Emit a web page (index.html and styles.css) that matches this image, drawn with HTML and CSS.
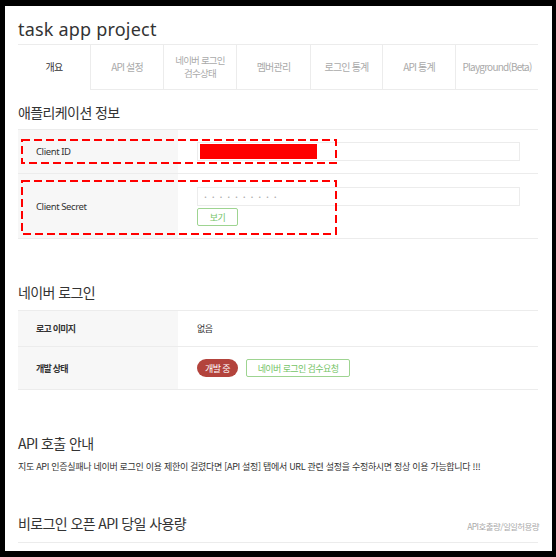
FILE: index.html
```html
<!DOCTYPE html>
<html lang="ko">
  <head>
    <meta charset="UTF-8">
    <meta name="viewport" content="width=device-width, initial-scale=1.0">
    <title>task app project</title>
    <link rel="stylesheet" href="styles.css">
  </head>
  <body>
    <div class="frame">
      <h1 class="app-title">task app project</h1>
      <ul class="tabs">
        <li class="tab active">개요</li>
        <li class="tab">API 설정</li>
        <li class="tab two-line">네이버 로그인<br>검수상태</li>
        <li class="tab">멤버관리</li>
        <li class="tab">로그인 통계</li>
        <li class="tab">API 통계</li>
        <li class="tab">Playground(Beta)</li>
      </ul>

      <h2 class="sec-title first">애플리케이션 정보</h2>
      <div class="info-table">
        <div class="row row-id">
          <div class="label latin">Client ID</div>
          <div class="value">
            <div class="text-box"><span class="redact"></span></div>
          </div>
        </div>
        <div class="row row-secret">
          <div class="label latin">Client Secret</div>
          <div class="value stack">
            <div class="text-box"><span class="dots">••••••••••</span></div>
            <button type="button" class="btn-line small">보기</button>
          </div>
        </div>
        <svg class="mark mark-id" width="316" height="25" viewBox="0 0 316 25">
          <rect x="1" y="1" width="314" height="23" fill="none" stroke="#ff0000" stroke-width="2" stroke-dasharray="8 4"/>
        </svg>
        <svg class="mark mark-secret" width="316" height="55" viewBox="0 0 316 55">
          <rect x="1" y="1" width="314" height="53" fill="none" stroke="#ff0000" stroke-width="2" stroke-dasharray="8 4"/>
        </svg>
      </div>

      <h2 class="sec-title second">네이버 로그인</h2>
      <div class="info-table">
        <div class="row row-logo">
          <div class="label strong">로고 이미지</div>
          <div class="value">없음</div>
        </div>
        <div class="row row-state">
          <div class="label strong">개발 상태</div>
          <div class="value inline">
            <span class="badge">개발 중</span>
            <button type="button" class="btn-line wide">네이버 로그인 검수요청</button>
          </div>
        </div>
      </div>

      <h2 class="sec-title third">API 호출 안내</h2>
      <p class="notice">지도 API 인증실패나 네이버 로그인 이용 제한이 걸렸다면 [API 설정] 탭에서 URL 관련 설정을 수정하시면 정상 이용 가능합니다 !!!</p>

      <div class="usage-head">
        <h2 class="sec-title fourth">비로그인 오픈 API 당일 사용량</h2>
        <span class="usage-unit">API호출량/일일허용량</span>
      </div>
    </div>
  </body>
</html>
```

FILE: styles.css
```css
body {
  margin: 0;
  background-color: #000;
  font-family: "Noto Sans CJK KR", "Noto Sans", sans-serif;
  color: #333;
}

.frame {
  margin: 6px 4px 6px 5px;
  height: 545px;
  padding: 0 14px 0 13px;
  background-color: #fff;
  overflow: hidden;
}

.app-title {
  margin: 0;
  height: 38px;
  padding-top: 12px;
  box-sizing: border-box;
  font-family: "Noto Sans", sans-serif;
  font-size: 18px;
  font-weight: normal;
  line-height: 22px;
  letter-spacing: 0.2px;
  color: #333;
}

/* tab bar */
.tabs {
  display: grid;
  grid-template-columns: 72px 73px 73px 74px 72px 73px 83px;
  margin: 0;
  padding: 0;
  list-style: none;
  border-top: 1px solid #ececec;
}

.tab {
  height: 44px;
  display: flex;
  align-items: center;
  justify-content: center;
  text-align: center;
  font-size: 10px;
  line-height: 12px;
  letter-spacing: -0.8px;
  color: #aaa;
  border-left: 1px solid #ececec;
  border-bottom: 1px solid #ececec;
}

.tab.two-line {
  font-size: 9.5px;
  line-height: 13px;
}

.tab.active {
  color: #333;
  border-left: none;
  border-bottom-color: transparent;
}

/* section headings */
.sec-title {
  margin: 0;
  font-size: 14px;
  font-weight: normal;
  line-height: 20px;
  letter-spacing: -0.6px;
  color: #333;
}

.sec-title.first {
  padding: 12px 0 7px;
}

.sec-title.second {
  padding: 43px 0 8px;
}

.sec-title.third {
  padding: 43px 0 0;
}

/* info tables */
.info-table {
  position: relative;
  border-top: 1px solid #ececec;
}

.row {
  display: flex;
  border-bottom: 1px solid #ececec;
}

.row-id { height: 43px; }
.row-secret { height: 64px; }
.row-logo { height: 35px; }
.row-state { height: 42px; }

.label {
  width: 160px;
  flex-shrink: 0;
  display: flex;
  align-items: center;
  padding-left: 18px;
  box-sizing: border-box;
  background-color: #f7f7f7;
  font-size: 9px;
  letter-spacing: -0.6px;
  color: #333;
}

.label.latin {
  font-family: "Noto Sans", sans-serif;
  font-size: 9.5px;
  letter-spacing: -0.4px;
}

.label.strong {
  font-weight: bold;
  letter-spacing: -0.8px;
}

.value {
  flex: 1;
  display: flex;
  align-items: center;
  padding-left: 19px;
  font-size: 9px;
  letter-spacing: -0.6px;
  color: #333;
}

.value.stack {
  flex-direction: column;
  align-items: flex-start;
  justify-content: flex-start;
  padding-top: 13px;
}

.value.inline {
  gap: 8px;
}

.text-box {
  width: 323px;
  height: 19px;
  box-sizing: border-box;
  border: 1px solid #ececec;
  display: flex;
  align-items: center;
  padding-left: 2px;
}

.redact {
  width: 117px;
  height: 15px;
  background-color: #ff0000;
}

.dots {
  padding-left: 4px;
  font-family: "DejaVu Sans", sans-serif;
  font-size: 5px;
  letter-spacing: 4.8px;
  color: #999;
}

.btn-line {
  height: 18px;
  padding: 0;
  box-sizing: border-box;
  border: 1px solid #9ed491;
  border-radius: 2px;
  background-color: #fff;
  font-family: "Noto Sans CJK KR", sans-serif;
  font-size: 9px;
  letter-spacing: -0.6px;
  color: #74c466;
}

.btn-line.small {
  width: 41px;
  margin-top: 2px;
}

.btn-line.wide {
  width: 104px;
}

.badge {
  width: 41px;
  height: 18px;
  border-radius: 9px;
  background-color: #b3433c;
  color: #fff;
  display: flex;
  align-items: center;
  justify-content: center;
  font-size: 9px;
  letter-spacing: -0.6px;
}

/* red dashed marks drawn over the table */
.mark {
  position: absolute;
  left: 3px;
}

.mark-id { top: 9px; }
.mark-secret { top: 50px; }

/* notice */
.notice {
  margin: 7px 0 0;
  font-size: 9px;
  line-height: 14px;
  letter-spacing: -0.3px;
  color: #333;
  white-space: nowrap;
}

.usage-head {
  display: flex;
  justify-content: space-between;
  align-items: flex-end;
  padding: 39px 0 9px;
  border-bottom: 1px solid #ececec;
}

.sec-title.fourth {
  padding: 0;
}

.usage-unit {
  margin-right: -1px;
  font-size: 8.5px;
  line-height: 14px;
  letter-spacing: -0.6px;
  color: #aaa;
}
```
